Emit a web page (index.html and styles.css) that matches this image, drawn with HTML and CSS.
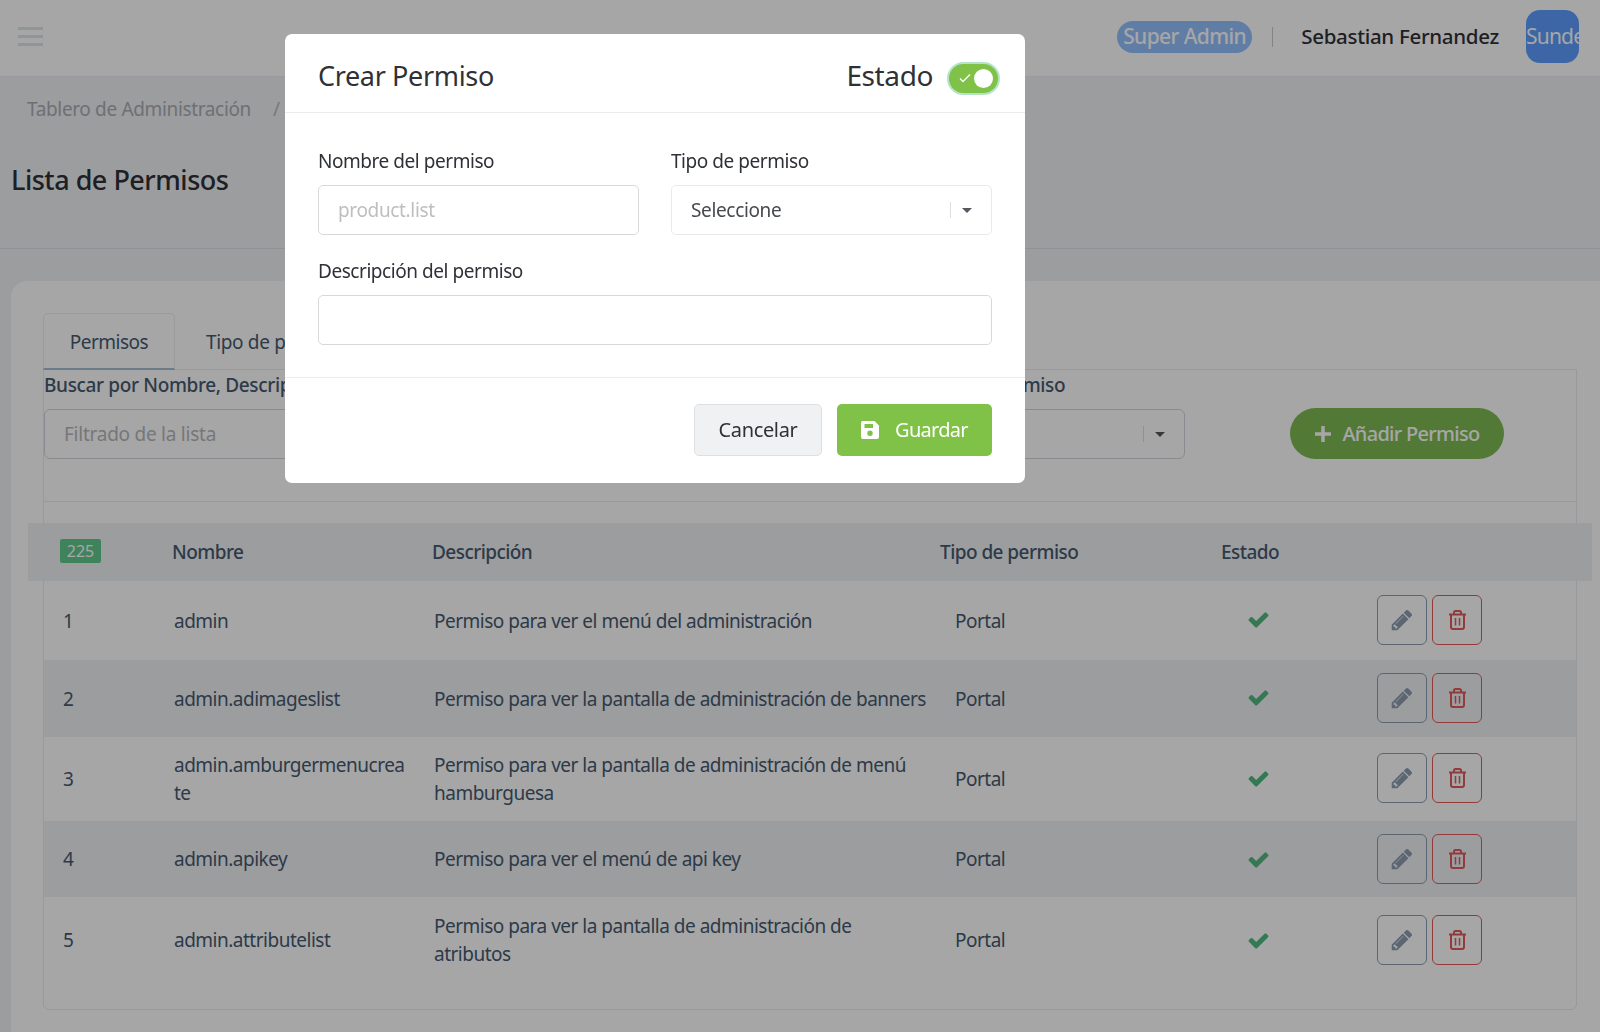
FILE: index.html
```html
<!DOCTYPE html>
<html lang="es">
<head>
<meta charset="utf-8">
<title>Lista de Permisos</title>
<link rel="stylesheet" href="styles.css">
</head>
<body>
<header class="topbar">
  <div class="burger"><span></span><span></span><span></span></div>
  <div class="user">
    <span class="role">Super Admin</span>
    <span class="sep"></span>
    <span class="name">Sebastian Fernandez</span>
    <span class="avatar">Sunde</span>
  </div>
</header>
<section class="pagehead">
  <nav class="crumbs"><span>Tablero de Administración</span><span class="slash">/</span></nav>
  <h1 class="title">Lista de Permisos</h1>
</section>
<main class="card">
  <div class="tabs">
    <div class="tab active">Permisos</div>
    <div class="tab">Tipo de permiso</div>
  </div>
  <div class="panel">
    <div class="filters">
      <div class="f-search">
        <label class="f-label">Buscar por Nombre, Descripción</label>
        <div class="f-input placeholder">Filtrado de la lista</div>
      </div>
      <div class="f-type">
        <label class="f-label">Tipo de permiso</label>
        <div class="f-input selectbox"><span class="vbar"></span><span class="caret"></span></div>
      </div>
      <div class="add">
        <svg class="plus" viewBox="0 0 18 18"><path d="M9 1v16M1 9h16"/></svg>
        <span>Añadir Permiso</span>
      </div>
    </div>
    <div class="thead">
      <div><span class="count">225</span></div>
      <div>Nombre</div>
      <div>Descripción</div>
      <div>Tipo de permiso</div>
      <div>Estado</div>
    </div>
    <div class="row h79">
      <div>1</div><div>admin</div><div>Permiso para ver el menú del administración</div><div>Portal</div>
      <div class="c"><svg class="ok" viewBox="0 0 1792 1792"><path d="M1671 566q0 40-28 68l-724 724-136 136q-28 28-68 28t-68-28l-136-136-362-362q-28-28-28-68t28-68l136-136q28-28 68-28t68 28l294 295 656-657q28-28 68-28t68 28l136 136q28 28 28 68z"/></svg></div>
      <div class="acts">
        <span class="btn edit"><svg class="pen" viewBox="0 0 1792 1792"><path d="M491 1536l91-91-235-235-91 91v107h128v128h107zm523-928q0-22-22-22-10 0-17 7l-542 542q-7 7-7 17 0 22 22 22 10 0 17-7l542-542q7-7 7-17zm-54-192l416 416-832 832h-416v-416zm683 96q0 53-37 90l-166 166-416-416 166-165q36-38 90-38 53 0 91 38l235 234q37 39 37 91z"/></svg></span>
        <span class="btn del"><svg class="bin" viewBox="0 0 17 20"><path d="M0 4.5h17M5 4.5V2.5q0-1.500 1.500-1.500h4q1.500 0 1.500 1.500v2M2 4.500V17q0 2 2 2h9q2 0 2-2V4.500"/><path class="thin" d="M6.500 8v7.500M10.500 8v7.500"/></svg></span>
      </div>
    </div>
    <div class="row alt h77">
      <div>2</div><div>admin.adimageslist</div><div>Permiso para ver la pantalla de administración de banners</div><div>Portal</div>
      <div class="c"><svg class="ok" viewBox="0 0 1792 1792"><path d="M1671 566q0 40-28 68l-724 724-136 136q-28 28-68 28t-68-28l-136-136-362-362q-28-28-28-68t28-68l136-136q28-28 68-28t68 28l294 295 656-657q28-28 68-28t68 28l136 136q28 28 28 68z"/></svg></div>
      <div class="acts">
        <span class="btn edit"><svg class="pen" viewBox="0 0 1792 1792"><path d="M491 1536l91-91-235-235-91 91v107h128v128h107zm523-928q0-22-22-22-10 0-17 7l-542 542q-7 7-7 17 0 22 22 22 10 0 17-7l542-542q7-7 7-17zm-54-192l416 416-832 832h-416v-416zm683 96q0 53-37 90l-166 166-416-416 166-165q36-38 90-38 53 0 91 38l235 234q37 39 37 91z"/></svg></span>
        <span class="btn del"><svg class="bin" viewBox="0 0 17 20"><path d="M0 4.5h17M5 4.5V2.5q0-1.500 1.500-1.500h4q1.500 0 1.500 1.500v2M2 4.500V17q0 2 2 2h9q2 0 2-2V4.500"/><path class="thin" d="M6.500 8v7.500M10.500 8v7.500"/></svg></span>
      </div>
    </div>
    <div class="row h84">
      <div>3</div><div>admin.amburgermenucrea<wbr>te</div><div>Permiso para ver la pantalla de administración de menú hamburguesa</div><div>Portal</div>
      <div class="c"><svg class="ok" viewBox="0 0 1792 1792"><path d="M1671 566q0 40-28 68l-724 724-136 136q-28 28-68 28t-68-28l-136-136-362-362q-28-28-28-68t28-68l136-136q28-28 68-28t68 28l294 295 656-657q28-28 68-28t68 28l136 136q28 28 28 68z"/></svg></div>
      <div class="acts">
        <span class="btn edit"><svg class="pen" viewBox="0 0 1792 1792"><path d="M491 1536l91-91-235-235-91 91v107h128v128h107zm523-928q0-22-22-22-10 0-17 7l-542 542q-7 7-7 17 0 22 22 22 10 0 17-7l542-542q7-7 7-17zm-54-192l416 416-832 832h-416v-416zm683 96q0 53-37 90l-166 166-416-416 166-165q36-38 90-38 53 0 91 38l235 234q37 39 37 91z"/></svg></span>
        <span class="btn del"><svg class="bin" viewBox="0 0 17 20"><path d="M0 4.5h17M5 4.5V2.5q0-1.500 1.500-1.500h4q1.500 0 1.500 1.500v2M2 4.500V17q0 2 2 2h9q2 0 2-2V4.500"/><path class="thin" d="M6.500 8v7.500M10.500 8v7.500"/></svg></span>
      </div>
    </div>
    <div class="row alt h76">
      <div>4</div><div>admin.apikey</div><div>Permiso para ver el menú de api key</div><div>Portal</div>
      <div class="c"><svg class="ok" viewBox="0 0 1792 1792"><path d="M1671 566q0 40-28 68l-724 724-136 136q-28 28-68 28t-68-28l-136-136-362-362q-28-28-28-68t28-68l136-136q28-28 68-28t68 28l294 295 656-657q28-28 68-28t68 28l136 136q28 28 28 68z"/></svg></div>
      <div class="acts">
        <span class="btn edit"><svg class="pen" viewBox="0 0 1792 1792"><path d="M491 1536l91-91-235-235-91 91v107h128v128h107zm523-928q0-22-22-22-10 0-17 7l-542 542q-7 7-7 17 0 22 22 22 10 0 17-7l542-542q7-7 7-17zm-54-192l416 416-832 832h-416v-416zm683 96q0 53-37 90l-166 166-416-416 166-165q36-38 90-38 53 0 91 38l235 234q37 39 37 91z"/></svg></span>
        <span class="btn del"><svg class="bin" viewBox="0 0 17 20"><path d="M0 4.5h17M5 4.5V2.5q0-1.500 1.500-1.500h4q1.500 0 1.500 1.500v2M2 4.500V17q0 2 2 2h9q2 0 2-2V4.500"/><path class="thin" d="M6.500 8v7.500M10.500 8v7.500"/></svg></span>
      </div>
    </div>
    <div class="row h86">
      <div>5</div><div>admin.attributelist</div><div>Permiso para ver la pantalla de administración de atributos</div><div>Portal</div>
      <div class="c"><svg class="ok" viewBox="0 0 1792 1792"><path d="M1671 566q0 40-28 68l-724 724-136 136q-28 28-68 28t-68-28l-136-136-362-362q-28-28-28-68t28-68l136-136q28-28 68-28t68 28l294 295 656-657q28-28 68-28t68 28l136 136q28 28 28 68z"/></svg></div>
      <div class="acts">
        <span class="btn edit"><svg class="pen" viewBox="0 0 1792 1792"><path d="M491 1536l91-91-235-235-91 91v107h128v128h107zm523-928q0-22-22-22-10 0-17 7l-542 542q-7 7-7 17 0 22 22 22 10 0 17-7l542-542q7-7 7-17zm-54-192l416 416-832 832h-416v-416zm683 96q0 53-37 90l-166 166-416-416 166-165q36-38 90-38 53 0 91 38l235 234q37 39 37 91z"/></svg></span>
        <span class="btn del"><svg class="bin" viewBox="0 0 17 20"><path d="M0 4.5h17M5 4.5V2.5q0-1.500 1.500-1.500h4q1.500 0 1.500 1.500v2M2 4.500V17q0 2 2 2h9q2 0 2-2V4.500"/><path class="thin" d="M6.500 8v7.500M10.500 8v7.500"/></svg></span>
      </div>
    </div>
  </div>
</main>

<div class="backdrop"></div>
<div class="modal">
  <div class="m-head">
    <h2 class="m-title">Crear Permiso</h2>
    <div class="m-state">
      <span>Estado</span>
      <span class="switch">
        <svg class="tick" viewBox="0 0 12 10"><path d="M1 5.500l3 3L11 1.500"/></svg>
        <span class="knob"></span>
      </span>
    </div>
  </div>
  <div class="m-body">
    <div class="m-grid">
      <div>
        <label class="m-label">Nombre del permiso</label>
        <div class="m-input ph">product.list</div>
      </div>
      <div>
        <label class="m-label">Tipo de permiso</label>
        <div class="m-input sel"><span>Seleccione</span><span class="vbar"></span><span class="caret"></span></div>
      </div>
    </div>
    <label class="m-label">Descripción del permiso</label>
    <div class="m-input"></div>
  </div>
  <div class="m-foot">
    <span class="cancel">Cancelar</span>
    <span class="save">
      <svg class="disk" viewBox="0 0 18 18"><path fill-rule="evenodd" d="M2 0H13.500L18 4.500V16a2 2 0 0 1-2 2H2a2 2 0 0 1-2-2V2a2 2 0 0 1 2-2ZM3.500 3V7H12V3ZM9 9.500a2.700 2.700 0 1 0 0 5.400a2.700 2.700 0 1 0 0-5.400Z"/></svg>
      <span class="save-text">Guardar</span>
    </span>
  </div>
</div>
</body>
</html>
```
FILE: styles.css
```css
* { box-sizing: border-box; }
html, body { margin: 0; height: 1032px; overflow: hidden; }
body {
  background: #f0f1f3;
  font-family: "Noto Sans", "Open Sans", sans-serif;
  font-size: 19px;
  letter-spacing: -0.35px;
  color: #46596e;
}

/* top bar */
.topbar {
  height: 77px;
  background: #fff;
  border-bottom: 1px solid #ebedf0;
  display: flex;
  align-items: center;
  justify-content: space-between;
  padding: 0 21px 3px 18px;
}
.burger { width: 25px; display: flex; flex-direction: column; gap: 5px; }
.burger span { height: 3px; background: #dde6e6; }
.user { display: flex; align-items: center; }
.role {
  background: #94c0fc;
  color: #fff;
  height: 32px;
  line-height: 30px;
  padding: 0 6px;
  border-radius: 16px;
  font-size: 21px;
  font-weight: 500;
  letter-spacing: -0.6px;
  margin-right: 2px;
}
.sep { width: 1px; height: 20px; background: #c8cacc; margin: 0 28px 0 18px; }
.name { color: #2e3136; font-size: 20.5px; font-weight: 500; margin-right: 27px; padding-bottom: 2px; letter-spacing: -0.3px; }
.avatar {
  width: 53px;
  height: 53px;
  border-radius: 14px;
  background: #5c9dfc;
  color: #fff;
  font-size: 21px;
  line-height: 53px;
  overflow: hidden;
  white-space: nowrap;
  letter-spacing: -0.8px;
}

/* page head */
.pagehead {
  height: 172px;
  border-bottom: 1px solid #dfe1e4;
  padding: 18px 11px 0;
}
.crumbs { padding-left: 16px; line-height: 28px; color: #aaacb1; display: flex; gap: 22px; }
.slash { color: #b8babd; }
.title {
  margin: 38px 0 0;
  font-size: 27px;
  line-height: 38px;
  font-weight: 500;
  letter-spacing: -0.5px;
  color: #2e3136;
}

/* card */
.card {
  margin: 32px 0 0 11px;
  width: 1600px;
  background: #fff;
  border-radius: 16px 0 0 0;
  padding: 32px 0 0 32px;
  height: 760px;
}
.tabs { display: flex; height: 57px; width: 1534px; }
.tab { padding: 1px 31px 0; line-height: 57px; }
.tab.active {
  width: 132px;
  padding: 1px 0 0;
  line-height: 55px;
  text-align: center;
  letter-spacing: -0.5px;
  border: 1px solid #eceef1;
  border-bottom: 2px solid #a6bdd0;
  border-radius: 5px 5px 0 0;
}
.panel {
  width: 1534px;
  height: 641px;
  margin-top: -1px;
  border: 1px solid #e9ebee;
  border-radius: 0 0 6px 6px;
}

/* filters */
.filters {
  height: 132px;
  border-bottom: 1px solid #e9ebee;
  display: flex;
  align-items: flex-start;
}
.f-search { width: 880px; }
.f-type { width: 261px; }
.f-label { display: block; font-weight: 500; line-height: 28px; height: 39px; padding-top: 1px; white-space: nowrap; color: #46596e; }
.f-input {
  height: 50px;
  border: 1.5px solid #d2d6da;
  border-radius: 6px;
  padding: 0 0 0 19px;
  letter-spacing: -0.25px;
  display: flex;
  align-items: center;
  justify-content: flex-end;
}
.placeholder { justify-content: flex-start; color: #b5b7ba; }
.selectbox { padding-right: 19px; }
.vbar { width: 1px; height: 16px; background: #dcdee0; margin-right: 11px; }
.caret {
  width: 0; height: 0;
  border-left: 5px solid transparent;
  border-right: 5px solid transparent;
  border-top: 5px solid #55585c;
}
.add {
  margin: 38px 0 0 105px;
  width: 214px;
  height: 51px;
  border-radius: 26px;
  background: #80bb52;
  color: #fff;
  font-size: 20px;
  font-weight: 500;
  letter-spacing: -0.7px;
  display: flex;
  align-items: center;
  justify-content: center;
  gap: 10px;
}
.plus { width: 18px; height: 18px; fill: none; stroke: #fff; stroke-width: 3.5; }

/* table */
.thead {
  margin: 21px -16px 0;
  height: 58px;
  background: #f0f1f3;
  display: grid;
  grid-template-columns: 112px 260px 508px 281px 1fr;
  align-items: center;
  padding-left: 32px;
  font-weight: 500;
  letter-spacing: -0.55px;
  color: #46596e;
}
.count {
  display: inline-block;
  width: 41px;
  height: 24px;
  line-height: 24px;
  background: #62c98e;
  color: #fff;
  border-radius: 2px;
  text-align: center;
  font-size: 16px;
  font-weight: 400;
  vertical-align: middle;
  margin-top: -6px;
  letter-spacing: 0;
}
.row {
  display: grid;
  grid-template-columns: 111px 260px 521px 270px 66px 1fr;
  align-items: center;
  padding-left: 19px;
  line-height: 28px;
  letter-spacing: -0.5px;
}
.row > div:nth-child(2) { padding-right: 24px; }
.row > div:nth-child(3) { padding-right: 25px; }
.alt { background: #f0f1f3; }
.h79 { height: 79px; }
.h77 { height: 77px; }
.h84 { height: 84px; }
.h76 { height: 76px; }
.h86 { height: 86px; }
.h79 .acts, .h77 .acts, .h84 .acts,
.h79 .c, .h77 .c, .h84 .c { margin-bottom: 2px; }
.c { display: flex; justify-content: center; }
.ok { width: 23px; height: 23px; fill: #52ba80; }
.acts { display: flex; gap: 5px; margin-left: 86px; }
.btn {
  width: 50px;
  height: 50px;
  border-radius: 6px;
  border: 1.5px solid #8c9dae;
  display: flex;
  align-items: center;
  justify-content: center;
  background: transparent;
}
.btn.del { border-color: #e25a5a; }
.pen { width: 24px; height: 24px; fill: #8c9dae; }
.bin { width: 17px; height: 20px; fill: none; stroke: #e25a5a; stroke-width: 2; }
.bin .thin { stroke-width: 1.5; }

/* overlay */
.backdrop { position: fixed; inset: 0; background: rgba(0, 1, 4, .35); }
.modal {
  position: fixed;
  left: 285px;
  top: 34px;
  width: 740px;
  height: 449px;
  background: #fff;
  border-radius: 7px;
  color: #2e3136;
  display: flex;
  flex-direction: column;
}
.m-head {
  height: 79px;
  border-bottom: 1px solid #ececee;
  display: flex;
  align-items: center;
  justify-content: space-between;
  padding: 4px 25px 0 33px;
}
.m-title { margin: 0; font-size: 27px; font-weight: 400; }
.m-state { display: flex; align-items: center; gap: 14px; font-size: 28px; letter-spacing: -0.4px; }
.switch {
  width: 53px;
  height: 33px;
  margin-top: 6px;
  border-radius: 17px;
  background: #80c147;
  border: 2px solid #b5e3c8;
  display: flex;
  align-items: center;
  justify-content: space-between;
  padding: 0 5px 0 10px;
}
.tick { width: 12px; height: 10px; fill: none; stroke: #fff; stroke-width: 1.25; }
.knob { width: 19px; height: 19px; border-radius: 50%; background: #fff; }
.m-body { flex: 1; padding: 33px 33px 0 33px; }
.m-grid { display: grid; grid-template-columns: 321px 321px; column-gap: 32px; margin-bottom: 21px; }
.m-label { display: block; line-height: 28px; height: 39px; padding-top: 1px; color: #2e3136; white-space: nowrap; letter-spacing: -0.45px; }
.m-input {
  height: 50px;
  border: 1.5px solid #d5d9dc;
  border-radius: 5px;
  padding: 0 19px;
  display: flex;
  align-items: center;
}
.ph { color: #bcbec0; }
.sel { border-color: #e9e9ea; justify-content: space-between; color: #46494d; }
.sel span:first-child { flex: 1; }
.m-foot {
  height: 106px;
  border-top: 1px solid #ececee;
  display: flex;
  justify-content: flex-end;
  align-items: flex-start;
  gap: 15px;
  padding: 26px 33px 0 0;
}
.cancel {
  width: 128px;
  height: 52px;
  line-height: 49px;
  text-align: center;
  background: #f0f1f3;
  border: 1.5px solid #dedfe2;
  border-radius: 5px;
  font-size: 20px;
}
.save {
  width: 155px;
  height: 52px;
  background: #80c147;
  color: #fff;
  border-radius: 5px;
  font-size: 20px;
  letter-spacing: -0.7px;
  display: flex;
  align-items: center;
  justify-content: center;
  gap: 16px;
}
.save-text { padding-bottom: 2px; }
.disk { width: 18px; height: 18px; fill: #fff; }
```
